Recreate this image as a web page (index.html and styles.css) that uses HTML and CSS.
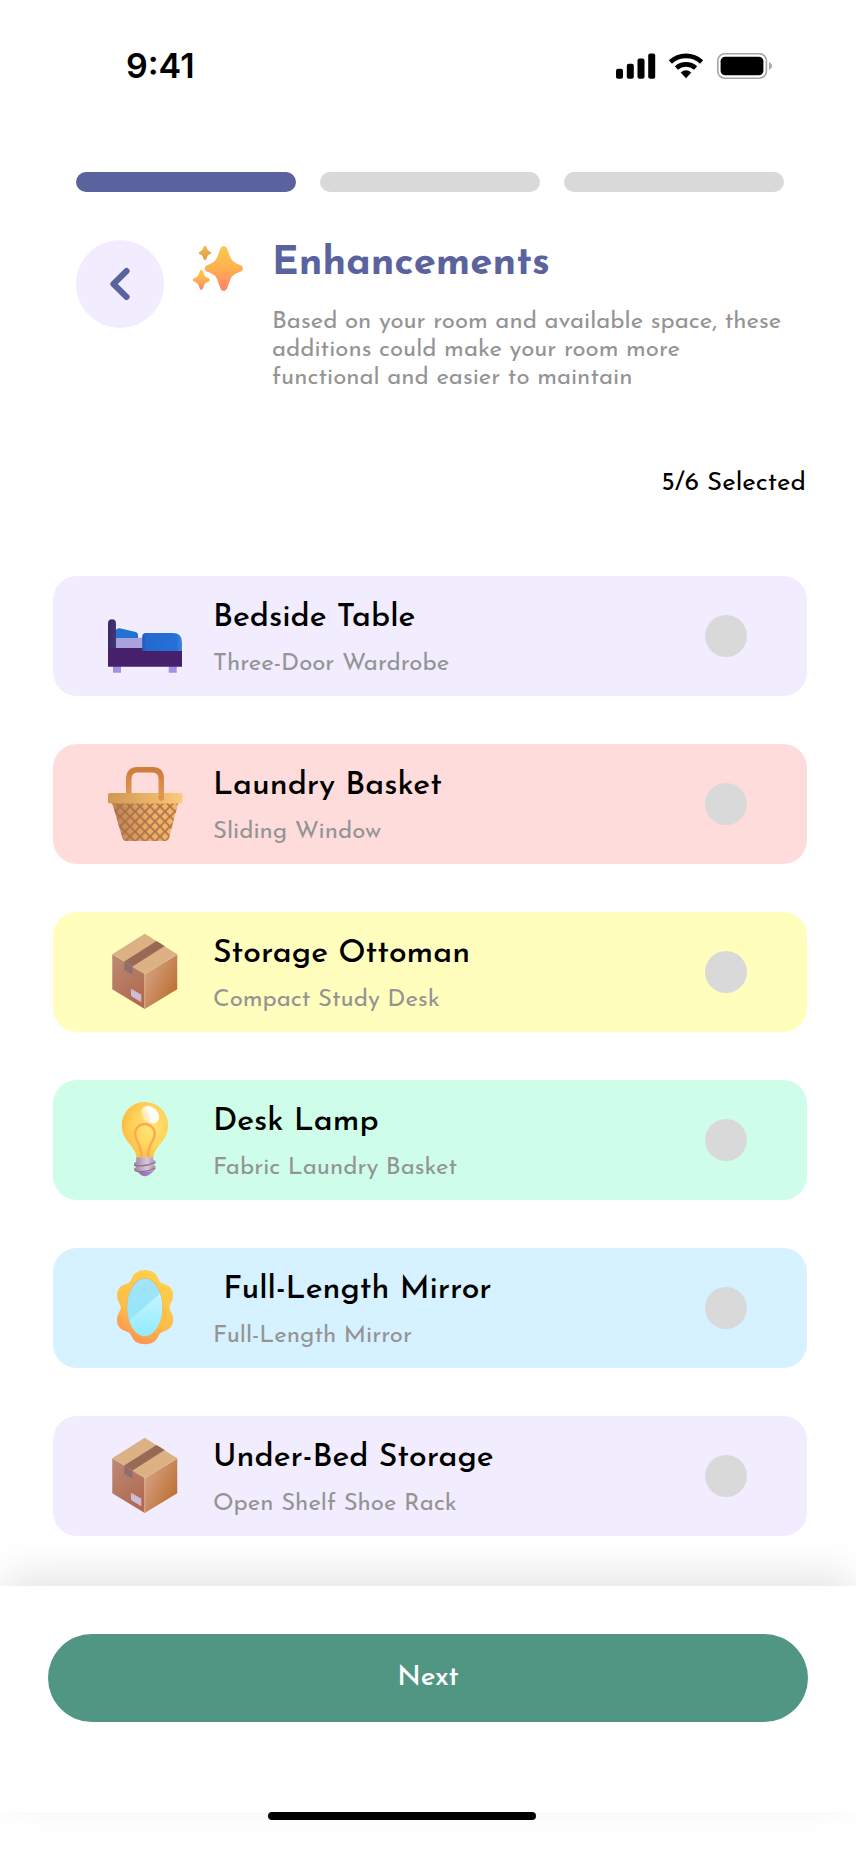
FILE: index.html
```html
<!DOCTYPE html>
<html lang="en">
<head>
<meta charset="utf-8">
<meta name="viewport" content="width=device-width, initial-scale=1">
<title>Enhancements</title>
<link rel="stylesheet" href="styles.css">
</head>
<body>
<svg class="defs" width="0" height="0" aria-hidden="true">
  <defs>
    <linearGradient id="star" x1="0" y1="0" x2="0" y2="1"><stop offset="0" stop-color="#fbcb4c"/><stop offset=".5" stop-color="#fdb04f"/><stop offset="1" stop-color="#ff7f6e"/></linearGradient>
    <linearGradient id="star-small" x1="0" y1="0" x2="0" y2="1"><stop offset="0" stop-color="#f3b84a"/><stop offset="1" stop-color="#e09a4f"/></linearGradient>
    <linearGradient id="head" x1="0" y1="0" x2="1" y2="0"><stop offset="0" stop-color="#3a2a63"/><stop offset="1" stop-color="#46347a"/></linearGradient>
    <linearGradient id="quilt" x1="0" y1="0" x2="1" y2="0"><stop offset="0" stop-color="#2458bb"/><stop offset=".12" stop-color="#226ad0"/><stop offset=".85" stop-color="#256fd6"/><stop offset="1" stop-color="#3d88dc"/></linearGradient>
    <linearGradient id="rim" x1="0" y1="0" x2="1" y2="0"><stop offset="0" stop-color="#cf9752"/><stop offset=".5" stop-color="#e6b065"/><stop offset="1" stop-color="#fccb7c"/></linearGradient>
    <linearGradient id="wicker" x1="0" y1="0" x2="1" y2="0"><stop offset="0" stop-color="#b98050"/><stop offset=".6" stop-color="#eeb068"/><stop offset="1" stop-color="#f7b765"/></linearGradient>
    <linearGradient id="handle" x1="0" y1="0" x2="0" y2="1"><stop offset="0" stop-color="#cf7d38"/><stop offset="1" stop-color="#e39b57"/></linearGradient>
    <pattern id="weave" width="4" height="4" patternUnits="userSpaceOnUse" patternTransform="translate(2 1)"><path d="M-1-1 5 5M5-1-1 5" stroke="#a36a45" stroke-opacity=".85" stroke-width=".75"/></pattern>
    <linearGradient id="box-left" x1="0" y1="0" x2=".5" y2="1"><stop offset="0" stop-color="#bd8b76"/><stop offset="1" stop-color="#b06a50"/></linearGradient>
    <linearGradient id="box-right" x1=".1" y1=".2" x2=".8" y2=".8"><stop offset="0" stop-color="#d5a180"/><stop offset="1" stop-color="#bd7238"/></linearGradient>
    <radialGradient id="glow" cx=".62" cy=".45" r=".65"><stop offset="0" stop-color="#ffe77b"/><stop offset=".55" stop-color="#ffd45a"/><stop offset="1" stop-color="#fdb843"/></radialGradient>
    <linearGradient id="shine" x1="0" y1="1" x2=".6" y2="0"><stop offset="0" stop-color="#fff" stop-opacity="0"/><stop offset=".65" stop-color="#fff"/></linearGradient>
    <linearGradient id="screw" x1="0" y1="0" x2="1" y2="0"><stop offset="0" stop-color="#9a8298"/><stop offset=".6" stop-color="#d9c8dc"/><stop offset="1" stop-color="#a68fab"/></linearGradient>
    <linearGradient id="screw-tip" x1="0" y1="0" x2="1" y2="0"><stop offset="0" stop-color="#8f6fb0"/><stop offset="1" stop-color="#b184d3"/></linearGradient>
    <linearGradient id="frame" x1=".7" y1="0" x2=".3" y2="1"><stop offset="0" stop-color="#ffd24a"/><stop offset=".6" stop-color="#fdbd49"/><stop offset="1" stop-color="#fd8f55"/></linearGradient>
    <linearGradient id="glass" x1="0" y1="0" x2="0" y2="1"><stop offset="0" stop-color="#a3e3f8"/><stop offset="1" stop-color="#8be8ff"/></linearGradient>
    <linearGradient id="glint" x1="0" y1="0" x2="0" y2="1"><stop offset="0" stop-color="#c9f6ff"/><stop offset="1" stop-color="#8deaff"/></linearGradient>
    <clipPath id="glass-clip"><ellipse cx="15.9" cy="15.7" rx="7" ry="11.5"/></clipPath>
    <symbol id="parcel" viewBox="0 0 32 32">
      <path d="M2.9 8.9 15.9 16.8V30.8L2.9 22.9Z" fill="url(#box-left)"/>
      <path d="M28.9 8.9 15.9 16.8V30.8L28.9 22.9Z" fill="url(#box-right)"/>
      <path d="M15.9.7 28.9 8.9 15.9 16.8 2.9 8.9Z" fill="#dcb183"/>
      <path d="M15.9 30.5V16.8L28.7 9.1" fill="none" stroke="#e4bd97" stroke-opacity=".55" stroke-width=".45"/>
      <path d="M20.6 3.6 23.9 5.6 11 13.8 7.7 11.8Z" fill="#986a56"/>
      <path d="M7.7 11.8 11 13.8V17.1L7.7 15.2Z" fill="#8f6f6b"/>
      <path d="M10.4 22.7 14.5 25V28.1L10.4 25.6Z" fill="#cdbbd8"/>
    </symbol>
  </defs>
</svg>

<div class="screen">
  <div class="status">
    <span class="clock">9:41</span>
    <span class="status-icons">
      <svg width="40" height="26" viewBox="0 0 40 26" aria-hidden="true"><rect x="0" y="15.7" width="7" height="10" rx="2"/><rect x="10.8" y="10.7" width="7" height="15" rx="2"/><rect x="21.5" y="5.4" width="7" height="20.3" rx="2"/><rect x="32.2" y=".4" width="7" height="25.3" rx="2"/></svg>
      <svg width="36" height="26" viewBox="0 0 36 26" aria-hidden="true"><g fill="none" stroke="#000" stroke-width="4.6"><path d="M2.4 9A23 23 0 0 1 33.6 9"/><path d="M8.4 15A14.5 14.5 0 0 1 27.6 15"/></g><path d="M12.7 19.6Q18 15 23.3 19.6L18 25.2Z"/></svg>
      <svg width="56" height="26" viewBox="0 0 56 26" aria-hidden="true"><rect x="1.8" y=".8" width="48.6" height="24.4" rx="7" fill="none" stroke="#a6a6a6" stroke-width="1.6"/><rect x="4.6" y="3.8" width="42.8" height="18.4" rx="4.5"/><path d="M53 9Q56 10.5 56 13T53 17Z" fill="#a6a6a6"/></svg>
    </span>
  </div>

  <main>
    <div class="progress" role="progressbar" aria-label="Step" aria-valuemin="0" aria-valuemax="3" aria-valuenow="1">
      <span class="step step-done"></span><span class="step"></span><span class="step"></span>
    </div>

    <header class="intro">
      <button class="back" type="button" aria-label="Back">
        <svg width="20" height="34" viewBox="0 0 20 34" aria-hidden="true"><path d="M16.6 4 3.4 17 16.6 30" fill="none" stroke="#5b639f" stroke-width="6" stroke-linecap="round" stroke-linejoin="round"/></svg>
      </button>
      <svg class="sparkles" width="52" height="48" viewBox="0 0 52 48" aria-hidden="true">
        <path fill="url(#star)" d="M28.6 4Q31.7 0 34.8 4L38.6 13.8Q40 17.500 44 19.200L49.500 21.800Q52.500 24.500 49.500 27.200L44 29.400Q40 31 38.600 35L34.800 45Q31.700 49 28.600 45L25 35Q23.500 31 19.500 29.400L14.200 27.200Q11.200 24.500 14.200 21.800L19.500 19.200Q23.500 17.500 25 13.800Z"/>
        <path fill="url(#star-small)" d="M13 1.7Q14.200 1.700 15.200 5.100 15.700 6.300 17 6.900 19.300 8 19.300 8.900T17 10.700Q15.700 11.300 15.200 12.500 14.200 16.300 13 16.300T10.800 12.500Q10.300 11.300 9 10.700 6.700 9.800 6.700 8.900T9 6.900Q10.300 6.300 10.800 5.100 11.800 1.700 13 1.700Z"/>
        <path fill="url(#star)" d="M9.300 25.700Q10.800 25.700 12 30.600 12.700 32.500 14.700 33.300 18 34.700 18 36T14.700 38.500Q12.700 39.300 12 41.200 10.800 46 9.300 46T6.600 41.200Q5.900 39.300 3.900 38.500.6 37.200.6 36T3.900 33.300Q5.900 32.500 6.600 30.600 7.800 25.700 9.300 25.700Z"/>
      </svg>
      <div class="intro-text">
        <h1>Enhancements</h1>
        <p>Based on your room and available space, these additions could make your room more functional and easier to maintain</p>
      </div>
    </header>

    <p class="count">5/6 Selected</p>

    <ul class="options">
      <li><label class="card lilac">
        <svg class="icon" viewBox="0 0 32 32" aria-hidden="true">
          <path d="M3.2 28H6.4V30.7H3.2ZM25.5 28H28.7V30.7H25.5Z" fill="#a391e6"/>
          <path d="M4.2 16.7H15.5V21H4.2Z" fill="#a9a2df"/>
          <path d="M4.3 14.2Q4.3 12.9 5.9 12.9L12.3 14.4Q13.2 14.7 13.2 15.5V16.8H4.3Z" fill="#2371d2"/>
          <path d="M1.2 20.8H30.8V28.3H1.2Z" fill="#47206b"/>
          <path d="M1.2 21V10.9A1.6 1.6 0 0 1 4.4 10.9V21Z" fill="url(#head)"/>
          <path d="M14.9 22V16.2Q14.9 14.8 16.3 14.8H27Q30.8 14.8 30.8 18.5V22Z" fill="url(#quilt)"/>
        </svg>
        <span class="text"><span class="name">Bedside Table</span><span class="detail">Three-Door Wardrobe</span></span>
        <input type="checkbox">
      </label></li>
      <li><label class="card pink">
        <svg class="icon" viewBox="0 0 32 32" aria-hidden="true">
          <path d="M2.7 15H29.4L25.7 29.3Q25.3 30.8 23.9 30.8H8.5Q7.400 30.800 6.900 29.300Z" fill="url(#wicker)"/>
          <path d="M2.7 15H29.4L25.7 29.3Q25.3 30.8 23.9 30.8H8.5Q7.400 30.800 6.900 29.300Z" fill="url(#weave)"/>
          <rect x="1.2" y="11.6" width="29.8" height="4.2" rx=".9" fill="url(#rim)"/>
          <path d="M9.5 11.7V6Q9.5 2.300 13 2.300H19Q22.500 2.300 22.500 6V13.6" fill="none" stroke="url(#handle)" stroke-width="2.2"/>
          <circle cx="22.5" cy="13.6" r="1.1" fill="#dd9350"/>
        </svg>
        <span class="text"><span class="name">Laundry Basket</span><span class="detail">Sliding Window</span></span>
        <input type="checkbox">
      </label></li>
      <li><label class="card yellow">
        <svg class="icon" aria-hidden="true"><use href="#parcel"/></svg>
        <span class="text"><span class="name">Storage Ottoman</span><span class="detail">Compact Study Desk</span></span>
        <input type="checkbox">
      </label></li>
      <li><label class="card mint">
        <svg class="icon" viewBox="0 0 32 32" aria-hidden="true">
          <path d="M15.9.8A9.2 9.2 0 0 1 25.2 10.1C25.200 16.500 20 18 19.300 23H12.700C12 18 6.700 16.500 6.700 10.100A9.200 9.200 0 0 1 15.900.8Z" fill="url(#glow)"/>
          <path d="M14.6 23C14.6 17 12 16.5 12 13.5A3.900 3.900 0 0 1 19.900 13.500C19.900 16.500 17.200 17 17.200 23" fill="none" stroke="#fcac50" stroke-width="1"/>
          <ellipse cx="18" cy="5.9" rx="4" ry="3.1" fill="url(#shine)" transform="rotate(42 18 5.9)"/>
          <path d="M12.600 28.300H19.600Q18.500 29.500 17.500 30Q16 31 14.400 30Z" fill="url(#screw-tip)"/>
          <path d="M12.500 22.900H19.300V24L20.200 24.300V25.400L19.300 26 20.200 26.400V27.500Q19.700 28.300 19 28.600H12.700L11.600 28.200V27.400L12.500 26.800 11.600 26.300V25.300L12.500 24.600Z" fill="url(#screw)"/>
          <path d="M11.800 26.100Q16 26.900 20 25M12 28.300Q16 29.300 20 27.300" fill="none" stroke="#8d7190" stroke-width=".5"/>
        </svg>
        <span class="text"><span class="name">Desk Lamp</span><span class="detail">Fabric Laundry Basket</span></span>
        <input type="checkbox">
      </label></li>
      <li><label class="card blue">
        <svg class="icon" viewBox="0 0 32 32" aria-hidden="true">
          <path d="M16 .8C18.800.8 20.600 2.200 21.300 4.200 21.800 5.600 22.500 6.100 23.900 6.500 27.600 7.500 28 11.500 26.300 14.200 25.600 15.400 25.600 16.200 26.300 17.400 28.200 20.500 27.400 24.200 23.900 25.200 22.400 25.700 21.800 26.200 21.300 27.400 20.400 29.400 18.800 30.500 16 30.500S11.600 29.400 10.700 27.400C10.200 26.200 9.600 25.700 8.100 25.200 4.600 24.200 3.900 20.500 5.800 17.400 6.500 16.200 6.500 15.400 5.800 14.200 4.100 11.500 4.500 7.500 8.100 6.500 9.500 6.100 10.200 5.600 10.700 4.200 11.400 2.200 13.200.8 16 .8Z" fill="url(#frame)"/>
          <ellipse cx="15.9" cy="15.7" rx="7.3" ry="11.8" fill="#f3b44e"/>
          <g clip-path="url(#glass-clip)"><path d="M8 3H24V29H8Z" fill="url(#glass)"/><path d="M8 22.5 24 8.5V29H8Z" fill="url(#glint)"/></g>
        </svg>
        <span class="text"><span class="name">&nbsp;Full-Length Mirror</span><span class="detail">Full-Length Mirror</span></span>
        <input type="checkbox">
      </label></li>
      <li><label class="card lilac">
        <svg class="icon" aria-hidden="true"><use href="#parcel"/></svg>
        <span class="text"><span class="name">Under-Bed Storage</span><span class="detail">Open Shelf Shoe Rack</span></span>
        <input type="checkbox">
      </label></li>
    </ul>
  </main>

  <footer class="actions">
    <button class="next" type="button">Next</button>
  </footer>
  <div class="home"></div>
</div>
</body>
</html>
```
FILE: styles.css
```css
* { box-sizing: border-box; }
body {
  margin: 0;
  background: #fff;
  color: #000;
  font-family: "Josefin Sans", Lato, sans-serif;
}
h1, p, ul { margin: 0; padding: 0; }
ul { list-style: none; }
.defs { position: absolute; }
.screen { overflow: hidden; }

.status {
  display: flex;
  justify-content: space-between;
  align-items: center;
  padding: 44px 84px 0 126px;
}
.clock {
  font: 600 34px/44px Inter, sans-serif;
}
.status-icons { display: flex; gap: 12px; }

.progress {
  display: flex;
  gap: 24px;
  padding: 84px 72px 0 76px;
}
.step {
  flex: 1;
  height: 20px;
  border-radius: 10px;
  background: #d9d9d9;
}
.step-done { background: #5b639f; }

.intro {
  display: flex;
  align-items: flex-start;
  gap: 28px;
  padding: 48px 72px 0 76px;
}
.back {
  display: grid;
  place-items: center;
  flex: none;
  width: 88px;
  height: 88px;
  padding: 0;
  border: 0;
  border-radius: 50%;
  background: #f1edff;
}
.sparkles { flex: none; margin-top: 4px; }
.intro-text {
  display: grid;
  flex: 1;
  gap: 24px;
  padding-top: 4px;
}
h1 {
  color: #5b639f;
  font-size: 40px;
  font-weight: 700;
  line-height: 40px;
}
.intro p {
  color: #949494;
  font-size: 24px;
  line-height: 28px;
}

.count {
  padding: 76px 50px 0 0;
  font-size: 26px;
  line-height: 32px;
  text-align: right;
}

.options {
  display: grid;
  gap: 48px;
  padding: 76px 49px 50px 53px;
}
.card {
  display: flex;
  align-items: center;
  gap: 28px;
  min-height: 120px;
  padding: 18px 60px 18px 52px;
  border-radius: 24px;
}
.lilac { background: #f1edff; }
.pink { background: #ffdcdc; }
.yellow { background: #fffebc; }
.mint { background: #cefee9; }
.blue { background: #d6f1ff; }
.icon { flex: none; width: 80px; height: 80px; }
.text {
  display: grid;
  flex: 1;
  gap: 12px;
  padding-top: 4px;
}
.name {
  font-size: 32px;
  font-weight: 500;
  line-height: 40px;
}
.detail {
  color: #949494;
  font-size: 24px;
  line-height: 28px;
}
.card input {
  appearance: none;
  flex: none;
  width: 42px;
  height: 42px;
  margin: 0;
  border-radius: 50%;
  background: #d9d9d9;
}
.card input:checked { background: #519683; }

.actions {
  padding: 48px 48px 90px;
  background: #fff;
  box-shadow: 0 -14px 40px -4px rgba(0, 0, 0, .115);
}
.next {
  display: block;
  width: 100%;
  height: 88px;
  border: 0;
  border-radius: 44px;
  background: #519683;
  color: #fff;
  font-family: inherit;
  font-size: 28px;
  font-weight: 500;
}
.home {
  position: relative;
  width: 268px;
  height: 8px;
  margin: 0 0 32px 268px;
  border-radius: 4px;
  background: #000;
}
```
